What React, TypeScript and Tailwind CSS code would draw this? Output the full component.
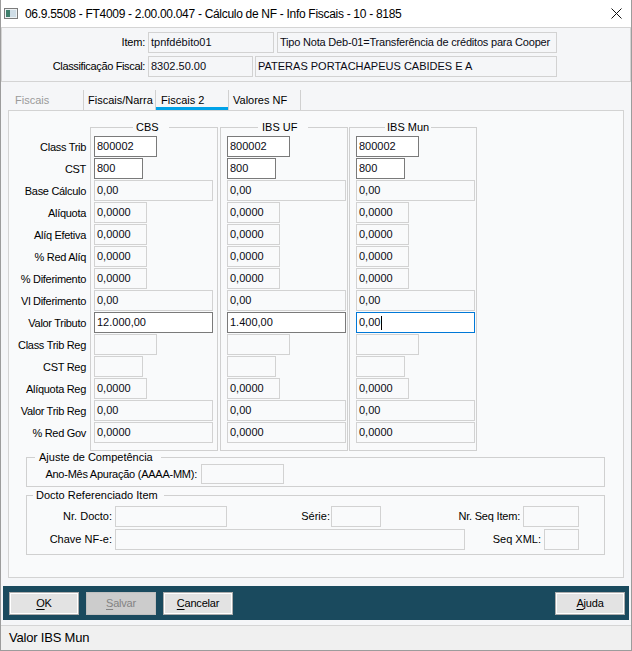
import React from 'react'

type Kind = 'ro' | 'ed' | 'focus'

function Field({ w, v = '', kind = 'ro', h = 'h-[21px]', extra = '' }: { w: string; v?: string; kind?: Kind; h?: string; extra?: string }) {
  const look =
    kind === 'ed'
      ? 'border-[#7a7a7a] bg-white'
      : kind === 'focus'
        ? 'border-[#0078d7] bg-white'
        : 'border-[#d2d2d2] bg-transparent'
  return (
    <div className={`${w} ${h} ${look} ${extra} shrink-0 border flex items-center pl-[2px] overflow-hidden whitespace-nowrap text-[11px] text-[#0a0a14]`}>
      {v}
      {kind === 'focus' && <span className="ml-[1px] w-[1px] h-[14px] bg-black" />}
    </div>
  )
}

const W6 = 'w-[63px]'
const W3 = 'w-[49px]'
const W4 = 'w-[53px]'
const WW = 'w-[119px]'

type Row = { label: string; w: string; vals: string[]; kind: Kind }

const rows: Row[] = [
  { label: 'Class Trib', w: W6, vals: ['800002', '800002', '800002'], kind: 'ed' },
  { label: 'CST', w: W3, vals: ['800', '800', '800'], kind: 'ed' },
  { label: 'Base Cálculo', w: WW, vals: ['0,00', '0,00', '0,00'], kind: 'ro' },
  { label: 'Alíquota', w: W4, vals: ['0,0000', '0,0000', '0,0000'], kind: 'ro' },
  { label: 'Alíq Efetiva', w: W4, vals: ['0,0000', '0,0000', '0,0000'], kind: 'ro' },
  { label: '% Red Alíq', w: W4, vals: ['0,0000', '0,0000', '0,0000'], kind: 'ro' },
  { label: '% Diferimento', w: W4, vals: ['0,0000', '0,0000', '0,0000'], kind: 'ro' },
  { label: 'Vl Diferimento', w: WW, vals: ['0,00', '0,00', '0,00'], kind: 'ro' },
  { label: 'Valor Tributo', w: WW, vals: ['12.000,00', '1.400,00', '0,00'], kind: 'ed' },
  { label: 'Class Trib Reg', w: W6, vals: ['', '', ''], kind: 'ro' },
  { label: 'CST Reg', w: W3, vals: ['', '', ''], kind: 'ro' },
  { label: 'Alíquota Reg', w: W4, vals: ['0,0000', '0,0000', '0,0000'], kind: 'ro' },
  { label: 'Valor Trib Reg', w: WW, vals: ['0,00', '0,00', '0,00'], kind: 'ro' },
  { label: '% Red Gov', w: WW, vals: ['0,0000', '0,0000', '0,0000'], kind: 'ro' },
]

const groups = [
  { title: 'CBS', box: 'ml-0', legend: 'ml-[42px] pl-[3px] pr-[10px]', pad: 'pl-[3px]' },
  { title: 'IBS UF', box: 'ml-[2px]', legend: 'ml-[37px] pl-[4px] pr-[11px]', pad: 'pl-[6px]' },
  { title: 'IBS Mun', box: 'ml-[1px]', legend: 'ml-[35px] pl-[2px] pr-[2px]', pad: 'pl-[6px]' },
]

function Btn({ first, rest, disabled }: { first: string; rest: string; disabled?: boolean }) {
  return (
    <div
      className={`w-[70px] h-[23px] shrink-0 flex items-center justify-center border text-[11px] tracking-[-0.2px] shadow-[inset_0_0_0_1px_#ffffff] ${
        disabled ? 'bg-[#cccccc] border-[#bfbfbf] text-[#838383] shadow-none' : 'bg-[#e3e3e3] border-[#adadad] text-black'
      }`}
    >
      <span className="underline underline-offset-[2px]">{first}</span>
      {rest}
    </div>
  )
}

export default function App() {
  return (
    <div className="w-[632px] h-[651px] flex flex-col bg-[#f5f6f8] border-x border-b border-[#9c9c9c] font-['Liberation_Sans',Arial,sans-serif] text-[11px] text-black overflow-hidden">
      {/* title bar */}
      <div className="h-[27px] shrink-0 bg-white flex items-center">
        <svg className="ml-[3px]" width="14" height="11" viewBox="0 0 14 11">
          <rect x="0.5" y="0.5" width="13" height="10" fill="#eef2f4" stroke="#7c7c7c" />
          <rect x="2" y="2" width="4" height="7" fill="#3f7f6c" />
          <rect x="6" y="2" width="6" height="7" fill="#cfdde6" />
        </svg>
        <span className="ml-[7px] text-[12px] tracking-[-0.3px]">
          06.9.5508 - FT4009 - 2.00.00.047 - Cálculo de NF - Info Fiscais - 10 - 8185
        </span>
        <svg className="ml-auto mr-[9px]" width="11" height="11" viewBox="0 0 11 11">
          <path d="M0.5 0.5 L10.5 10.5 M10.5 0.5 L0.5 10.5" stroke="#111" strokeWidth="1" />
        </svg>
      </div>

      {/* header panel */}
      <div className="h-[55px] shrink-0 border border-[#d4d4d4] flex flex-col pt-[4px] gap-[3px]">
        <div className="flex items-center">
          <div className="w-[143px] text-right tracking-[-0.2px]">Item:</div>
          <div className="ml-[3px]"><Field w="w-[126px]" v="tpnfdébito01" /></div>
          <div className="ml-[3px]">
            <Field w="w-[280px]" v="Tipo Nota Deb-01=Transferência de créditos para Cooper" extra="tracking-[-0.2px]" />
          </div>
        </div>
        <div className="flex items-center">
          <div className="w-[143px] text-right tracking-[-0.35px]">Classificação Fiscal:</div>
          <div className="ml-[3px]"><Field w="w-[105px]" v="8302.50.00" /></div>
          <div className="ml-[2px]"><Field w="w-[302px]" v="PATERAS PORTACHAPEUS CABIDES E A" /></div>
        </div>
      </div>

      {/* tabs */}
      <div className="h-[28px] shrink-0 flex items-end pl-[7px]">
        <div className="w-[76px] h-[20px] border-r border-[#d0d0d0] pl-[7px] flex items-center text-[#9a9a9a]">Fiscais</div>
        <div className="w-[72px] h-[20px] border-r border-[#d0d0d0] pl-[4px] flex items-center">Fiscais/Narra</div>
        <div className="w-[73px] h-[20px] border-r border-[#d0d0d0] pl-[5px] flex items-center shadow-[inset_0_-3px_0_#00a2e8]">Fiscais 2</div>
        <div className="w-[72px] h-[20px] border-r border-[#d0d0d0] pl-[4px] flex items-center">Valores NF</div>
      </div>

      {/* tab panel */}
      <div className="ml-[7px] w-[616px] h-[468px] shrink-0 border border-[#d3d3d3] bg-[#f9fafb] flex flex-col">
        <div className="flex mt-[10px]">
          <div className="w-[81px] pt-[15px] flex flex-col tracking-[-0.3px]">
            {rows.map((r) => (
              <div key={r.label} className="h-[22px] flex items-center justify-end pr-[4px] whitespace-nowrap">
                {r.label}
              </div>
            ))}
          </div>
          {groups.map((g, gi) => (
            <fieldset key={g.title} className={`${g.box} w-[128px] border border-[#d0d0d0] px-0 pb-[6px]`}>
              <legend className={`${g.legend} leading-[13px]`}>{g.title}</legend>
              <div className={`${g.pad} pt-[2px] flex flex-col`}>
                {rows.map((r) => (
                  <div key={r.label} className="h-[22px]">
                    <Field
                      w={r.w}
                      v={r.vals[gi]}
                      kind={r.label === 'Valor Tributo' && gi === 2 ? 'focus' : r.kind}
                    />
                  </div>
                ))}
              </div>
            </fieldset>
          ))}
        </div>

        <fieldset className="ml-[17px] w-[579px] border border-[#d0d0d0] px-0 pb-[2px]">
          <legend className="ml-[8px] pl-[4px] pr-[8px] leading-[13px]">Ajuste de Competência</legend>
          <div className="flex items-center">
            <div className="w-[170px] text-right tracking-[-0.25px] whitespace-nowrap">Ano-Mês Apuração (AAAA-MM):</div>
            <div className="ml-[4px]"><Field w="w-[83px]" h="h-[20px]" /></div>
          </div>
        </fieldset>

        <fieldset className="mt-[2px] ml-[17px] w-[579px] border border-[#d0d0d0] px-0 pt-[4px] pb-[4px]">
          <legend className="ml-[6px] pl-[3px] pr-[6px] leading-[13px]">Docto Referenciado Item</legend>
          <div className="flex flex-col gap-[2px]">
            <div className="flex items-center">
              <div className="w-[85px] text-right">Nr. Docto:</div>
              <div className="ml-[3px]"><Field w="w-[112px]" /></div>
              <div className="w-[103px] text-right">Série:</div>
              <div className="ml-[1px]"><Field w="w-[50px]" /></div>
              <div className="w-[139px] text-right tracking-[-0.2px]">Nr. Seq Item:</div>
              <div className="ml-[3px]"><Field w="w-[56px]" /></div>
            </div>
            <div className="flex items-center">
              <div className="w-[85px] text-right">Chave NF-e:</div>
              <div className="ml-[3px]"><Field w="w-[350px]" /></div>
              <div className="w-[76px] text-right">Seq XML:</div>
              <div className="ml-[3px]"><Field w="w-[35px]" /></div>
            </div>
          </div>
        </fieldset>
      </div>

      {/* button bar */}
      <div className="mt-[8px] mx-[2px] h-[34px] shrink-0 bg-[#1a4a5e] flex items-center pl-[6px] pr-[4px] gap-[7px]">
        <Btn first="O" rest="K" />
        <Btn first="S" rest="alvar" disabled />
        <Btn first="C" rest="ancelar" />
        <div className="ml-auto">
          <Btn first="A" rest="juda" />
        </div>
      </div>

      {/* status bar */}
      <div className="mt-[5px] flex-1 border-t border-[#d5d5d5] bg-[#f0f0f0] flex items-center pl-[8px] text-[13px] tracking-[-0.2px]">
        Valor IBS Mun
      </div>
    </div>
  )
}
